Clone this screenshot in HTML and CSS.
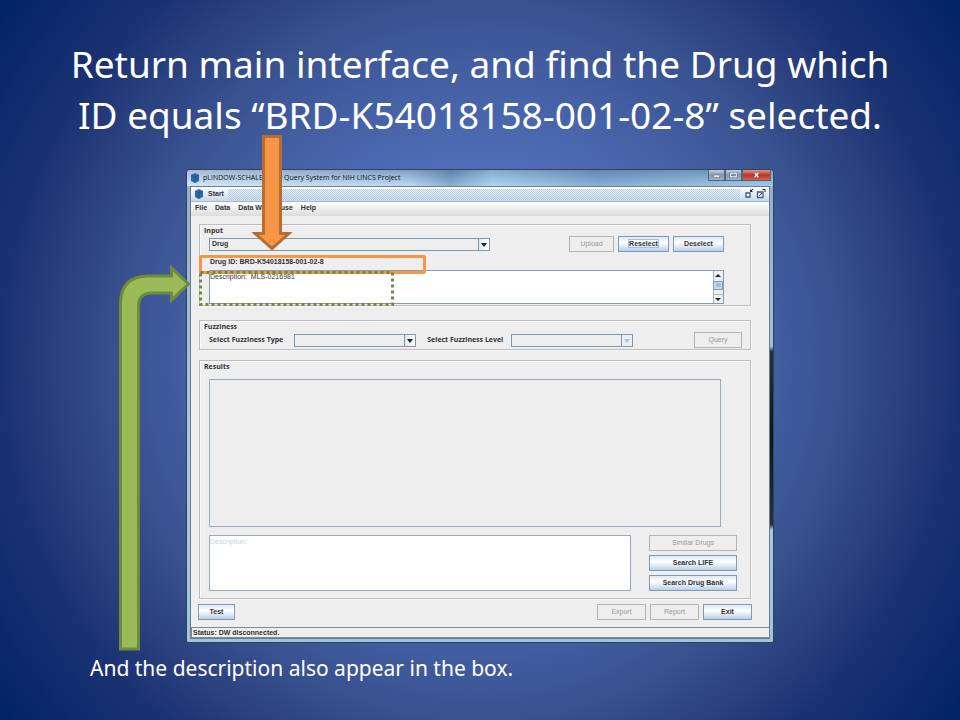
FILE: index.html
```html
<!DOCTYPE html>
<html lang="en">
<head>
<meta charset="utf-8">
<title>Query System for NIH LINCS Project</title>
<link rel="stylesheet" href="styles.css">
</head>
<body>
<main class="slide">
  <h1 class="headline">Return main interface, and find the Drug which<br>ID equals “BRD-K54018158-001-02-8” selected.</h1>
  <section class="stage">
    <div class="window">
      <header class="titlebar">
        <svg class="cube" viewBox="0 0 10 10" aria-hidden="true"><path d="M5 0 9 2V8L5 10 1 8V2Z" fill="#2d68ab"/><path d="M1 2 5 4 9 2M5 4V10" fill="none" stroke="#1b4c8c" stroke-width=".6"/></svg>
        <span class="titlebar-text">pLINDOW-SCHALE Array Query System for NIH LINCS Project</span>
        <div class="caption-buttons">
          <button class="cap" aria-label="Minimize"><svg viewBox="0 0 16 11"><path d="M4.500 5.500h7v2.500h-7z" fill="#fff" stroke="#46546c" stroke-width=".6"/></svg></button>
          <button class="cap" aria-label="Maximize"><svg viewBox="0 0 16 11"><path d="M5 3.500h6v4H5z" fill="none" stroke="#46546c" stroke-width="2.400"/><path d="M5 3.500h6v4H5z" fill="none" stroke="#fff" stroke-width="1.300"/></svg></button>
          <button class="cap cap-close" aria-label="Close"><svg viewBox="0 0 16 11"><path d="m6 3 4 5m0-5-4 5" stroke="#4d3040" stroke-width="2.800"/><path d="m6 3 4 5m0-5-4 5" stroke="#fff" stroke-width="1.600"/></svg></button>
        </div>
      </header>
      <div class="client">
        <div class="frame-title">
          <svg class="cube" viewBox="0 0 10 10" aria-hidden="true"><path d="M5 0 9 2V8L5 10 1 8V2Z" fill="#2d68ab"/><path d="M1 2 5 4 9 2M5 4V10" fill="none" stroke="#1b4c8c" stroke-width=".6"/></svg>
          <span>Start</span>
          <div class="grip"></div>
          <svg class="frame-icons" viewBox="0 0 22 10" aria-hidden="true"><path d="M2 4h4v4H2z" fill="#fff" stroke="#3c5685" stroke-width="1.300"/><path d="M9 0 7 2M6.500.500v2h2" fill="none" stroke="#222"/><path d="M13.500 3h5.500v5.500h-5.500z" fill="#fff" stroke="#3c5685" stroke-width="1.300"/><path d="m15 7 3-3" stroke="#3c5685"/><path d="M18.500.500h2.500v2.500" fill="none" stroke="#222"/></svg>
        </div>
        <nav class="menubar">
          <a href="#">File</a><a href="#">Data</a><a href="#">Data Warehouse</a><a href="#">Help</a>
        </nav>
        <div class="body">
          <section class="panel panel-input">
            <h2>Input</h2>
            <div class="row row-input">
              <div class="combo combo-wide"><select aria-label="Input type"><option>Drug</option></select><i></i></div>
              <div class="actions">
                <button class="btn w-upload" disabled>Upload</button>
                <button class="btn w-select"><span class="focus">Reselect</span></button>
                <button class="btn w-select">Deselect</button>
              </div>
            </div>
            <p class="drug-id">Drug ID: BRD-K54018158-001-02-8</p>
            <div class="scrollbox">
              <textarea aria-label="Drug description">Description:  MLS-0216981</textarea>
              <svg class="scrollbar" viewBox="0 0 10 32" aria-hidden="true"><path d="M0 0h10v32H0z" fill="#eee"/><path d="M.5 0v32M0 10.500h10M0 23.500h10" stroke="#8fa3b8" stroke-width=".8"/><path d="M2 6h6L5 3z" fill="#222"/><path d="M2 27h6l-3 3z" fill="#222"/><path d="M.5 10.500h9v8h-9z" fill="#c4d9f0" stroke="#7c9bc2"/><path d="M3 13h5M3 15h5" stroke="#7c9bc2" stroke-width=".8"/></svg>
            </div>
          </section>
          <section class="panel panel-fuzz">
            <h2>Fuzziness</h2>
            <div class="row row-fuzz">
              <label for="ftype">Select Fuzziness Type</label>
              <div class="combo combo-type"><select id="ftype"><option></option></select><i></i></div>
              <label for="flevel">Select Fuzziness Level</label>
              <div class="combo combo-off"><select id="flevel" disabled><option></option></select><i></i></div>
              <button class="btn w-query" disabled>Query</button>
            </div>
          </section>
          <section class="panel panel-results">
            <h2>Results</h2>
            <div class="results-box"></div>
            <div class="results-foot">
              <textarea class="detail" aria-label="Result description">Description:</textarea>
              <div class="stack">
                <button class="btn" disabled>Similar Drugs</button>
                <button class="btn">Search LIFE</button>
                <button class="btn">Search Drug Bank</button>
              </div>
            </div>
          </section>
          <div class="footer">
            <button class="btn w-test">Test</button>
            <button class="btn w-foot push" disabled>Export</button>
            <button class="btn w-foot" disabled>Report</button>
            <button class="btn w-foot">Exit</button>
          </div>
        </div>
        <div class="status">Status: DW disconnected.</div>
      </div>
    </div>
    <div class="mark mark-id"></div>
    <svg class="mark mark-desc" viewBox="0 0 195 35" aria-hidden="true"><path d="M1.500 1.500H193.500V33.500H1.500Z" fill="none" stroke="#71893f" stroke-width="3" stroke-dasharray="3 3"/></svg>
    <svg class="arrow arrow-down" viewBox="0 0 40 116" aria-hidden="true"><path d="M11.500 1.500h17v97h8.500L20 113.500 3 98.500h8.500z" fill="#f79646" stroke="#b66d31" stroke-width="3"/></svg>
    <svg class="arrow arrow-bend" viewBox="0 0 72 388" aria-hidden="true"><path d="M2.500 386V41Q2.500 13 30.500 13H53.500V5L70.500 21 53.500 37V30H34.500Q20.500 30 20.500 43V386Z" fill="#9bbb59" stroke="#71893f" stroke-width="3"/></svg>
  </section>
  <p class="caption">And the description also appear in the box.</p>
</main>
</body>
</html>
```
FILE: styles.css
```css
* { box-sizing: border-box; }
body { margin: 0; font-family: "Liberation Sans", Arial, sans-serif; }
h1, h2, p { margin: 0; font-weight: inherit; }
button, select, textarea { font: inherit; color: inherit; margin: 0; padding: 0; border-radius: 0; }

.slide {
  min-height: 100vh;
  padding-top: 38px;
  color: #fff;
  background: radial-gradient(circle farthest-corner at 50% 50%, #5878c6 0%, #4f6eb8 32%, #435fa2 48%, #38518f 60%, #2b4180 70%, #1b3272 80%, #002364 100%);
}
.headline {
  padding: 0 20px;
  font: 400 37px/51px "Noto Sans", "Open Sans", sans-serif;
  text-align: center;
}
.caption {
  padding: 11px 90px 0;
  font: 400 21px/28px "Noto Sans", "Open Sans", sans-serif;
}
.stage { position: relative; margin: 29px 186px 0; }

.window {
  padding: 0 3px 3px;
  border: 1px solid #35424f;
  border-radius: 4px 4px 2px 2px;
  background:
    linear-gradient(#a9c9e8, #26323f 3%, #10161d 50%, #26323f 97%, #a9c9e8) right 176px / 3px 184px no-repeat,
    linear-gradient(#8fb0d2, #a9c9e8 60%, #9cc4ea);
  color: #333;
  font-size: 7px;
  font-weight: 700;
  line-height: 10px;
}
.window { background-position: right 176px, 0 0; }
.titlebar {
  display: flex;
  height: 16px;
  align-items: center;
  margin: 0 -3px;
  padding-left: 3px;
  gap: 3px;
  border-radius: 3px 3px 0 0;
  background: linear-gradient(90deg, #ffffff66, #ffffff22 38%, #3d659455 45%, #aad4f066 52%, #5079a866 70%, #8cb4d466), linear-gradient(#6d90b7, #b1d5f4);
}
.titlebar-text { flex: 1; color: #111; font: 400 7px/12px "Open Sans", sans-serif; }
.cube { width: 10px; height: 10px; flex: none; }
.caption-buttons { display: flex; align-self: flex-start; margin-right: 2px; }
.cap {
  width: 17px;
  height: 11px;
  border: 1px solid #53657a;
  border-top: 0;
  background: linear-gradient(#c3cfdd, #8597b0 50%, #a0b2c8);
}
.cap svg { display: block; width: 15px; height: 10px; }
.cap-close { width: 29px; background: linear-gradient(#dc9a87, #bd3324 50%, #d5624a); }
.cap-close svg { width: 27px; }
.client { background: #eee; border: 1px solid #6e7d8c; }

.frame-title {
  display: flex;
  align-items: center;
  height: 15px;
  padding: 0 3px;
  gap: 4px;
  background: linear-gradient(#fff, #c6d8eb);
  border-bottom: 1px solid #9eb8d4;
}
.grip {
  flex: 1;
  height: 11px;
  background: conic-gradient(#b5cbe3 25%, transparent 0 50%, #b5cbe3 0 75%, transparent 0) 0 0 / 2px 2px;
}
.frame-icons { width: 22px; height: 10px; }
.menubar {
  display: flex;
  height: 14px;
  gap: 8px;
  padding: 1px 4px;
  background: linear-gradient(#fff, #dcdcdc);
}
.menubar a { color: #333; text-decoration: none; }

.body { padding: 8px 18px 7px 7px; }
.panel {
  margin-left: 1px;
  border: 1px solid #bcbcbc;
  box-shadow: inset 1px 1px #f8f8f8, 1px 1px #f8f8f8;
  padding: 0 8px 0 9px;
}
.panel h2 { margin-left: -5px; font: 700 7px/12px "Open Sans", sans-serif; }
.row { display: flex; align-items: center; }
.panel-input { height: 82px; }
.row-input { justify-content: space-between; padding-right: 18px; margin-top: -1px; }
.actions { display: flex; gap: 4px; }
.btn {
  height: 16px;
  border: 1px solid #8399ae;
  background: linear-gradient(#dbe8f5, #fff 40%, #b9d0e9);
  line-height: 12px;
  white-space: nowrap;
}
.btn:disabled { border-color: #b4b4b4; background: #eee; color: #999; font-weight: 400; }
.w-upload { width: 45px; }
.w-select { width: 51px; }
.w-query { width: 48px; margin-left: auto; }
.w-test { width: 37px; }
.w-foot { width: 49px; }
.push { margin-left: auto; }
.focus { outline: 1px solid #a9c0dc; }

.combo { position: relative; height: 13px; width: 122px; }
.combo select {
  display: block;
  width: 100%;
  height: 100%;
  padding: 0 2px;
  appearance: none;
  border: 1px solid #7f98b0;
  background: linear-gradient(90deg, #dbe7f2, #fff) right / 11px 100% no-repeat #eee;
  line-height: 10px;
  opacity: 1;
}
.combo i {
  position: absolute;
  inset: 1px 1px 1px auto;
  width: 11px;
  border-left: 1px solid #7f98b0;
}
.combo i::after {
  content: "";
  position: absolute;
  top: 4px;
  left: 2px;
  border: solid transparent;
  border-width: 4px 3px 0;
  border-top-color: #222;
}
.combo-wide { width: 281px; }
.combo-off select { background: #eee; }
.combo-off i::after { border-top-color: #a9c5e6; }

.drug-id { padding: 5px 0 3px 1px; }
.scrollbox { display: flex; height: 34px; margin-right: 18px; border: 1px solid #8b9bab; background: #fff; }
.scrollbox textarea { flex: 1; }
.scrollbar { width: 10px; height: 32px; }
textarea { resize: none; border: 0; background: #fff; font-weight: 400; line-height: 12px; overflow: hidden; outline: 0; }

.panel-fuzz { height: 30px; margin-top: 14px; }
.row-fuzz { margin-top: -1px; gap: 11px; font-family: "Open Sans", sans-serif; }
.row-fuzz .btn { font-family: "Liberation Sans", Arial, sans-serif; }
.row-fuzz label { line-height: 12px; }
.combo-off { margin-left: -3px; }

.panel-results { height: 239px; margin-top: 10px; }
.results-box { height: 148px; margin: 6px 21px 0 0; border: 1px solid #9aaaba; }
.results-foot { display: flex; gap: 18px; margin: 8px 5px 0 0; }
.detail { flex: 1; border: 1px solid #9aaaba; color: #c2d3e8; }
.stack { display: flex; flex-direction: column; gap: 4px; width: 88px; }
.footer { display: flex; gap: 4px; margin: 5px -1px 0 0; }
.status { height: 11px; border: 1px solid #888; border-right: 0; padding-left: 1px; line-height: 9px; }

.mark { position: absolute; }
.mark-id { left: 13px; top: 86px; width: 227px; height: 19px; border: 3px solid #f79646; border-radius: 2px; }
.mark-desc { left: 13px; top: 102px; width: 195px; height: 35px; }
.arrow { position: absolute; }
.arrow-down { left: 66px; top: -34px; width: 40px; height: 116px; }
.arrow-bend { left: -68px; top: 94px; width: 72px; height: 388px; }
```
